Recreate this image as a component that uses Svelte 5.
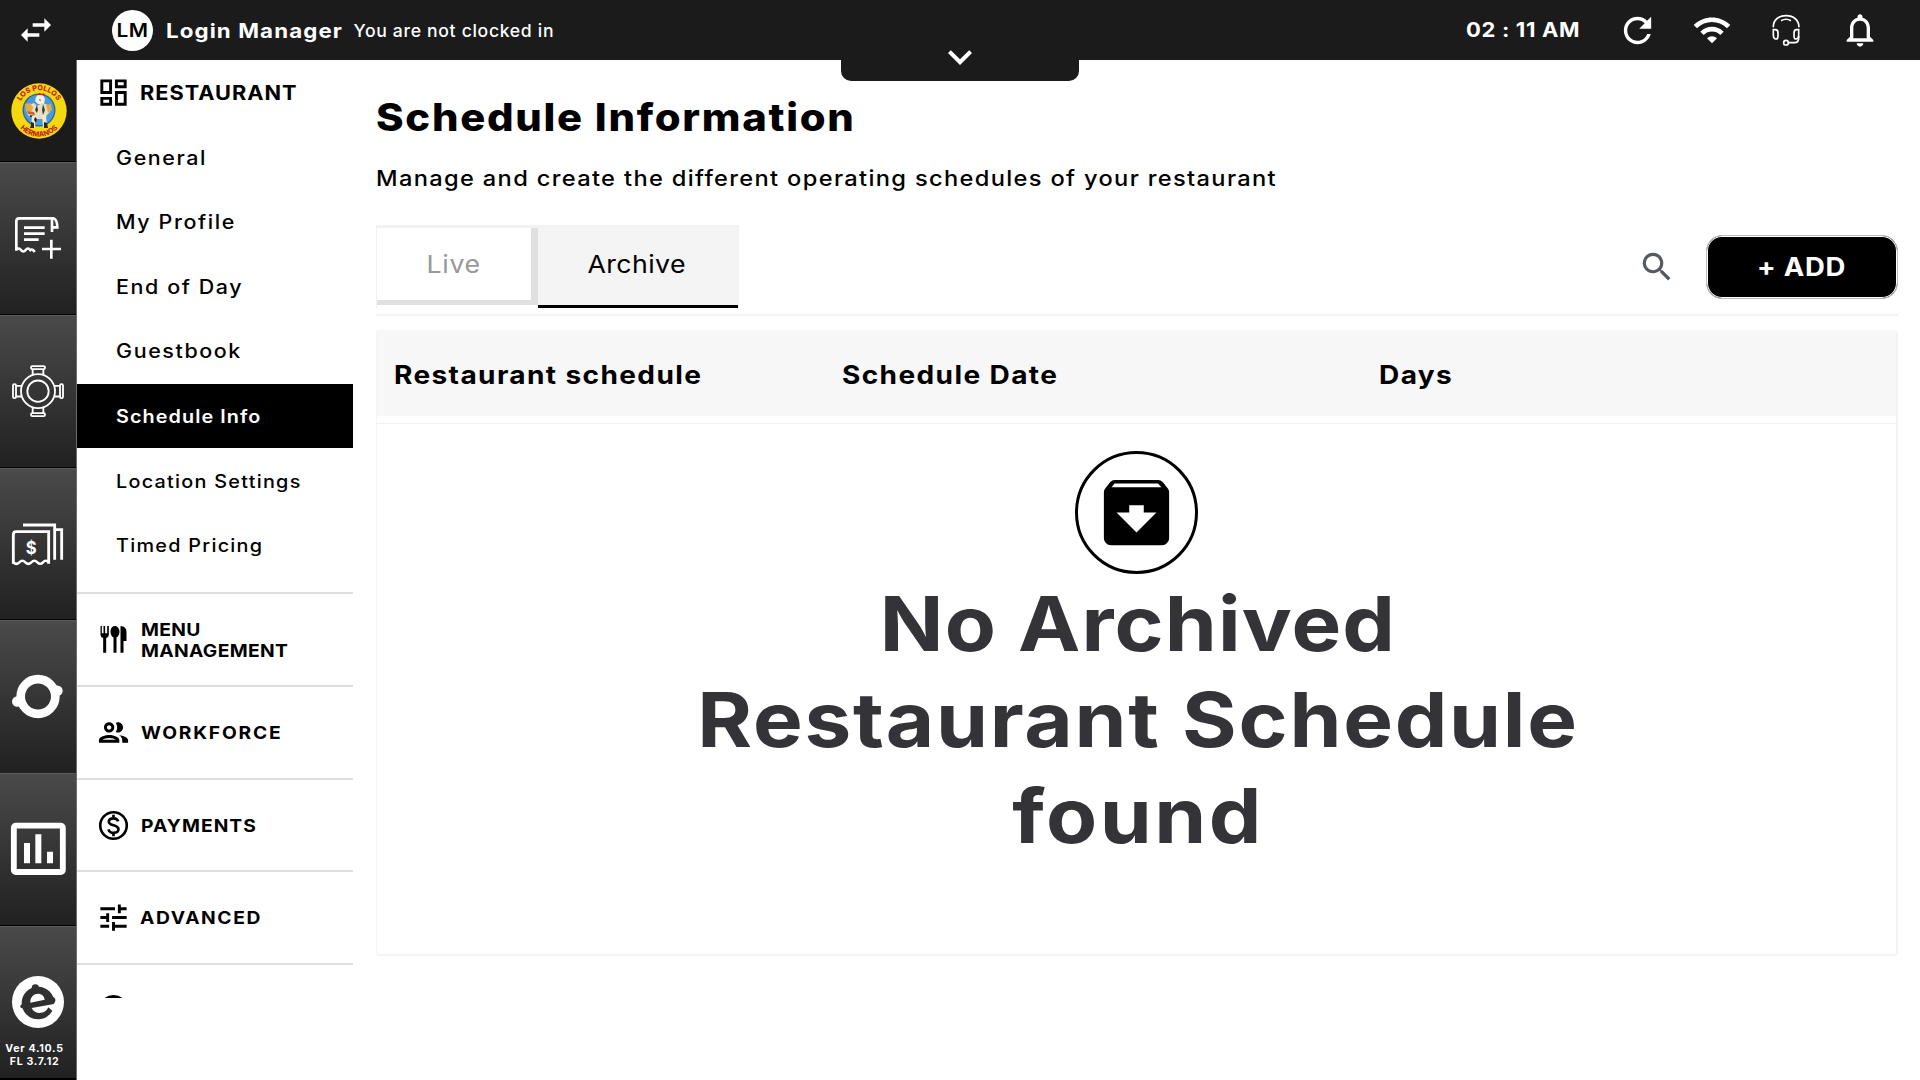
<script>
  const items = [
    { label: 'General' },
    { label: 'My Profile' },
    { label: 'End of Day' },
    { label: 'Guestbook' },
    { label: 'Schedule Info', cls: 'small active' },
    { label: 'Location Settings', cls: 'small' },
    { label: 'Timed Pricing', cls: 'small' }
  ];
</script>

<div class="app">
  <header>
    <div class="swap">
      <svg width="40" height="40" viewBox="0 0 24 24" fill="#fff"><path d="M6.99 11L3 15l3.99 4v-3H14v-2H6.99v-3zM21 9l-3.99-4v3H10v2h7.01v3L21 9z"/></svg>
    </div>
    <div class="avatar"><span class="wide mid">LM</span></div>
    <div class="name"><span class="wide">Login Manager</span></div>
    <div class="clock">You are not clocked in</div>
    <div class="time"><span class="wide">02 : 11 AM</span></div>
    <div class="tools">
      <svg width="41" height="41" viewBox="0 0 24 24" fill="#fff"><path d="M17.65 6.35C16.2 4.9 14.21 4 12 4c-4.42 0-7.99 3.58-7.99 8s3.57 8 7.99 8c3.73 0 6.84-2.55 7.73-6h-2.08c-.82 2.33-3.04 4-5.65 4-3.31 0-6-2.69-6-6s2.69-6 6-6c1.66 0 3.14.69 4.22 1.78L13 11h7V4l-2.35 2.35z"/></svg>
      <svg width="40" height="40" viewBox="0 0 24 24" fill="#fff"><path d="M1 9l2 2c4.97-4.97 13.03-4.97 18 0l2-2C16.93 2.93 7.08 2.93 1 9zm8 8l3 3 3-3c-1.65-1.66-4.34-1.66-6 0zm-4-4l2 2c2.76-2.76 7.24-2.76 10 0l2-2C15.14 9.14 8.87 9.14 5 13z"/></svg>
      <svg width="40" height="40" viewBox="1096 30 120 120" fill="none" stroke="#fff" stroke-width="5">
        <path d="M1118 82C1117 60 1134 47 1156 47S1195 60 1195 82"/>
        <path d="M1141 62C1150 57 1162 57 1171 62"/>
        <path d="M1118 89h6q8 0 8 10v8q0 10-6 10q-8 0-8-12zM1194 89h-6q-8 0-8 10v8q0 10 6 10q8 0 8-12z"/>
        <path d="M1194 108v6q0 14-12 14h-18"/>
        <circle cx="1156" cy="128" r="7"/>
      </svg>
      <svg width="40" height="40" viewBox="0 0 24 24" fill="#fff"><path d="M12 22c1.1 0 2-.9 2-2h-4c0 1.1.9 2 2 2zm6-6v-5c0-3.07-1.63-5.64-4.5-6.32V4c0-.83-.67-1.5-1.5-1.5s-1.5.67-1.5 1.5v.68C7.64 5.36 6 7.92 6 11v5l-2 2v1h16v-1l-2-2zm-2 1H8v-6c0-2.48 1.51-4.5 4-4.5s4 2.02 4 4.5v6z"/></svg>
    </div>
    <div class="drawer">
      <svg width="48" height="48" viewBox="0 0 24 24" fill="#fff"><path d="M16.59 8.59L12 13.17 7.41 8.59 6 10l6 6 6-6z"/></svg>
    </div>
  </header>

  <div class="body">
    <aside class="rail">
      <div class="logo">
        <svg width="56" height="56" viewBox="0 0 56 56">
          <defs>
            <path id="arc-top" d="M7.2 28A20.8 20.8 0 0 1 48.8 28"/>
            <path id="arc-bottom" d="M2.4 28A25.6 25.6 0 0 0 53.6 28"/>
          </defs>
          <circle cx="28" cy="28" r="27.7" fill="#f5d90f"/>
          <circle cx="28" cy="27" r="16.5" fill="#2c5f9e"/>
          <circle cx="28" cy="27" r="15.2" fill="#4a9bdc"/>
          <path d="M25 14l3-3 4 1 2 4-1 5h-6l-3-3z" fill="#f4f1e6"/>
          <path d="M26 12l2-2 3 1 2-1 1 3-4-1z" fill="#c5281c"/>
          <path d="M18 22l5-2 3 3 5-3 6 2 2 7-4 4-3 3H22l-5-4-2-5z" fill="#e8dfc0"/>
          <path d="M14 21l5-1 3 4-1 4-6 1zM35 22l5-1 1 6-4 3z" fill="#e0a94c"/>
          <path d="M16 28l7 1 1 3-7-1z" fill="#cf5f28"/>
          <path d="M26 22l1 5-1 3-2-3zM32 21l2 6-2 5-1-5zM19 32l5 1-1 2-4-1zM28 16l2 1-1 1z" fill="#3b3a33"/>
          <path d="M21 33h4l-1 11h-4zM31 32h4l1 12h-4z" fill="#efe8d2"/>
          <path d="M20 39l3 1v5h-4l1-3zM33 39l3 1 1 5h-4zM24 34l2 2-1 4-2-3z" fill="#2b2721"/>
          <text class="logo-text"><textPath href="#arc-top" startOffset="50%" text-anchor="middle">LOS POLLOS</textPath></text>
          <text class="logo-text"><textPath href="#arc-bottom" startOffset="50%" text-anchor="middle">HERMANOS</textPath></text>
        </svg>
      </div>
      <div class="tiles">
        <div class="tile">
          <svg viewBox="0 33 231 458.5" fill="none" stroke="#fff" stroke-width="8">
            <path d="M49 302V214q0-9 9-9H160q12 4 12 27H156M156 206V246M49 300q7-9 14 0t14 0t14 0q6-5 13 6"/>
            <path d="M72 233h62M72 251h62M72 269h44M126 297h57M154 269v57"/>
          </svg>
        </div>
        <div class="tile">
          <svg viewBox="0 491.5 231 458.5" fill="none" stroke="#fff" stroke-width="5.5">
            <circle cx="114" cy="723" r="51"/><circle cx="114" cy="723" r="32"/>
            <rect x="93" y="648" width="42" height="9" rx="4"/><path d="M98 657v16M130 657v16"/>
            <rect x="93" y="789" width="42" height="9" rx="4"/><path d="M98 789v-16M130 789v-16"/>
            <rect x="39" y="702" width="9" height="42" rx="4"/><path d="M48 707h16M48 739h16"/>
            <rect x="180" y="702" width="9" height="42" rx="4"/><path d="M180 707h-16M180 739h-16"/>
          </svg>
        </div>
        <div class="tile">
          <svg viewBox="0 949 231 458.5" fill="none" stroke="#fff" stroke-width="8.500">
            <path d="M40 1239v-87q0-9 9-9h97v96"/>
            <path d="M40 1235q9 9 18 0t18 0t18 0t18 0t17 0t17 0" stroke-width="7.500"/>
            <path d="M69 1123h95v104M168 1137h17v90"/>
            <text class="dollar" x="94" y="1209" text-anchor="middle">$</text>
          </svg>
        </div>
        <div class="tile">
          <svg viewBox="0 27.500 231 458.5">
            <circle cx="114" cy="260" r="52" fill="none" stroke="#fff" stroke-width="26"/>
            <circle cx="52" cy="275" r="16" fill="#fff"/><circle cx="172" cy="243" r="16" fill="#fff"/>
          </svg>
        </div>
        <div class="tile flush">
          <svg viewBox="0 486 231 458.5">
            <rect x="41.500" y="647" width="147" height="139" rx="6" fill="none" stroke="#fff" stroke-width="17.500"/>
            <path d="M72 699h18v61H72zM106 673h18v87h-18zM141 725h18v35h-18z" fill="#fff"/>
          </svg>
        </div>
        <div class="tile">
          <svg viewBox="0 944 231 458.5">
            <circle cx="114" cy="1175" r="78" fill="#fff"/>
            <g fill="#303030">
              <circle cx="114" cy="1178" r="49"/><circle cx="106" cy="1133" r="11"/><circle cx="67" cy="1188" r="6"/><circle cx="156" cy="1170" r="10"/>
            </g>
            <path d="M91 1177C90 1144 131 1142 134 1168zM95 1193L158 1182L172 1176L176 1212L160 1204L145 1191C136 1213 104 1214 95 1193z" fill="#fff"/>
          </svg>
          <p class="version">Ver 4.10.5<br>FL 3.7.12</p>
        </div>
      </div>
    </aside>

    <nav>
      <div class="group">
        <svg width="35" height="35" viewBox="0 0 24 24"><path d="M19 5v2h-4V5h4M9 5v6H5V5h4m10 8v6h-4v-6h4M9 17v2H5v-2h4M21 3h-8v6h8V3zM11 3H3v10h8V3zm10 8h-8v10h8V11zm-10 4H3v6h8v-6z"/></svg>
        <span class="wide">RESTAURANT</span>
      </div>
      {#each items as it}
        <div class="item {it.cls ?? ''}"><span class="wide">{it.label}</span></div>
      {/each}
      <div class="sections">
        <div class="section">
          <svg width="35" height="35" viewBox="64.500 126 105 105"><path d="M78 138h4v22h5v-22h5v22h6v-22h5v26q0 8-8 10v44h-9v-44q-8-2-8-10zM121 138c8 0 14 8 14 17 0 8-4 15-9 17v46h-9v-46c-5-2-9-9-9-17 0-9 5-17 13-17zM138 138q18 2 18 18v27h-9v35h-9z"/></svg>
          <span class="wide">MENU<br>MANAGEMENT</span>
        </div>
        <div class="section">
          <svg width="35" height="35" viewBox="0 0 24 24"><path d="M9 13.750c-2.340 0-7 1.170-7 3.500V19h14v-1.750c0-2.330-4.660-3.500-7-3.500zM4.340 17c.84-.58 2.870-1.250 4.660-1.250s3.820.67 4.660 1.250H4.340zM9 12c1.930 0 3.500-1.570 3.500-3.500S10.930 5 9 5 5.500 6.570 5.500 8.500 7.070 12 9 12zm0-5c.83 0 1.500.67 1.500 1.500S9.830 10 9 10s-1.500-.67-1.500-1.500S8.170 7 9 7zm7.040 6.810c1.160.84 1.960 1.960 1.960 3.440V19h4v-1.750c0-2.020-3.500-3.170-5.960-3.440zM15 12c1.930 0 3.500-1.570 3.500-3.500S16.930 5 15 5c-.54 0-1.040.13-1.500.35.63.89 1 1.980 1 3.150s-.37 2.260-1 3.150c.46.22.96.35 1.500.35z"/></svg>
          <span class="wide w">WORKFORCE</span>
        </div>
        <div class="section">
          <svg width="35" height="35" viewBox="0 0 24 24" fill="none" stroke="#000" stroke-width="1.800"><circle cx="12" cy="12" r="9.100"/><path d="M15.200 9.200C14.700 7.800 13.600 7.100 12 7.100c-1.900 0-3.200.9-3.200 2.300 0 3.200 6.600 1.800 6.600 5.200 0 1.500-1.400 2.400-3.300 2.400-1.800 0-3.100-.8-3.600-2.400M12 4.600v2.600M12 16.900v2.500"/></svg>
          <span class="wide p">PAYMENTS</span>
        </div>
        <div class="section">
          <svg width="35" height="35" viewBox="0 0 24 24"><path d="M3 17v2h6v-2H3zM3 5v2h10V5H3zm10 16v-2h8v-2h-8v-2h-2v6h2zM7 9v2H3v2h4v2h2V9H7zm14 4v-2H11v2h10zm-6-4h2V7h4V5h-4V3h-2v6z"/></svg>
          <span class="wide a">ADVANCED</span>
        </div>
        <div class="section">
          <svg width="35" height="35" viewBox="0 0 24 24"><path d="M12 2a10 10 0 1 0 0 20a10 10 0 1 0 0-20z"/></svg>
        </div>
      </div>
    </nav>

    <main>
      <h1><span class="wide">Schedule Information</span></h1>
      <p class="sub"><span class="wide">Manage and create the different operating schedules of your restaurant</span></p>
      <div class="toolbar">
        <div class="tabs">
          <div class="tab live"><span class="wide mid">Live</span></div>
          <div class="tab archive"><span class="wide mid">Archive</span></div>
        </div>
        <div class="actions">
          <svg width="38" height="38" viewBox="0 0 24 24" fill="#555960"><path d="M15.500 14h-.79l-.28-.27C15.410 12.590 16 11.110 16 9.500 16 5.910 13.090 3 9.500 3S3 5.910 3 9.500 5.910 16 9.500 16c1.610 0 3.090-.59 4.230-1.570l.27.28v.79l5 4.990L20.490 19l-4.990-5zm-6 0C7.010 14 5 11.990 5 9.500S7.010 5 9.500 5 14 7.010 14 9.500 11.990 14 9.500 14z"/></svg>
          <button><span class="wide mid">+ ADD</span></button>
        </div>
      </div>
      <section class="table">
        <div class="thead">
          <div><span class="wide">Restaurant schedule</span></div>
          <div><span class="wide">Schedule Date</span></div>
          <div><span class="wide">Days</span></div>
        </div>
        <div class="tbody">
          <div class="badge">
            <svg width="87" height="87" viewBox="0 0 24 24"><path d="M20.540 5.230l-1.390-1.680C18.880 3.210 18.470 3 18 3H6c-.47 0-.88.21-1.160.55L3.460 5.230C3.170 5.570 3 6.020 3 6.500V19c0 1.100.9 2 2 2h14c1.100 0 2-.9 2-2V6.500c0-.48-.17-.93-.46-1.270zM12 17.500L6.500 12H10v-2h4v2h3.500L12 17.500zM5.120 5l.81-1h12l.94 1H5.120z"/></svg>
          </div>
          <h2><span class="first">No Archived</span> Restaurant Schedule <span class="last">found</span></h2>
        </div>
      </section>
    </main>
  </div>
</div>

<style>
  :global(body) { margin: 0; background: #fff; }
  .app { width: 1920px; height: 1080px; overflow: hidden; display: flex; flex-direction: column; font-family: Inter, "Liberation Sans", sans-serif; color: #000; background: #fff; }
  .app :global(svg) { display: block; flex: none; }

  /* Slightly extended letterforms for headings and labels */
  .wide { display: inline-block; transform: scaleX(1.1); transform-origin: left center; white-space: nowrap; }
  .mid { transform-origin: center; }

  header { position: relative; flex: none; height: 60px; background: #1b1b1b; color: #fff; display: flex; align-items: center; white-space: nowrap; }
  .swap { width: 112px; padding-left: 16px; box-sizing: border-box; }
  .avatar { width: 41px; height: 41px; border-radius: 50%; background: #fff; color: #000; font-size: 19px; font-weight: 600; letter-spacing: .4px; display: flex; align-items: center; justify-content: center; }
  .name { width: 188px; margin-left: 12.500px; font-size: 20.300px; font-weight: 700; letter-spacing: 1px; }
  .clock { width: 1112.500px; font-size: 17.600px; font-weight: 500; letter-spacing: .68px; }
  .time { width: 151px; font-size: 20px; font-weight: 700; letter-spacing: .6px; }
  .tools { display: flex; gap: 34px; align-items: center; }
  .drawer { position: absolute; left: 841px; top: 30px; width: 238px; height: 51px; border-radius: 0 0 10px 10px; background: #1b1b1b; display: flex; justify-content: center; align-items: flex-start; }
  .drawer svg { margin-top: 3px; }

  .body { flex: 1; display: flex; min-height: 0; }
  .rail { width: 77px; box-sizing: border-box; border-right: 1px solid #6b6b6b; background: #1b1b1b; color: #fff; display: flex; flex-direction: column; }
  .logo { height: 101px; flex: none; display: flex; justify-content: center; align-items: center; padding: 1px 0 0 1px; box-sizing: border-box; }
  .logo-text { font: 800 7.200px Inter, sans-serif; fill: #c5261d; }
  .tiles { flex: none; height: 917px; display: grid; grid-template-rows: repeat(6, minmax(0, 1fr)); border-bottom: 2px solid #000; }
  .tile { display: grid; border-top: 1px solid #000; background: linear-gradient(#4a4a4a, #212121); box-shadow: inset 0 1px 0 #5c5c5c; }
  .tile.flush { border-top-color: #222; }
  .tile svg { grid-area: 1 / 1; width: 77px; height: 152.830px; margin: -1px -1px -1px 0; }
  .dollar { font: 700 50px Inter, sans-serif; fill: #fff; stroke: none; }
  .version { grid-area: 1 / 1; align-self: end; margin: 0 7px 10px 0; text-align: center; font-size: 10.600px; line-height: 13px; font-weight: 700; letter-spacing: .7px; white-space: nowrap; }

  nav { width: 276px; height: 938px; flex: none; overflow: hidden; }
  .group { height: 65.500px; display: flex; align-items: center; padding-left: 19px; }
  .group span { margin-left: 9px; font-size: 19.800px; font-weight: 700; letter-spacing: .9px; }
  .item { box-sizing: border-box; height: 64.600px; padding: 1.200px 0 0 39px; line-height: 63.400px; font-size: 19.500px; font-weight: 500; letter-spacing: 1.450px; }
  .item.small { font-size: 18px; letter-spacing: 1.150px; }
  .item.active { background: #000; color: #fff; font-weight: 600; letter-spacing: .98px; }
  .sections { margin-top: 14.500px; }
  .section { height: 92.750px; box-sizing: border-box; border-top: 2px solid #dedede; display: flex; align-items: center; padding-left: 19px; }
  .section span { margin-left: 9.600px; font-size: 17.500px; line-height: 21px; font-weight: 700; letter-spacing: .3px; }
  .section .w { letter-spacing: 1.600px; }
  .section .p { letter-spacing: .95px; }
  .section .a { letter-spacing: 1.450px; margin-left: 9px; }
  .section:last-child svg { margin-top: -3px; }

  main { flex: 1; padding: 32px 22px 0 23px; }
  h1 { margin: -.5px 0 0 -.5px; font-size: 38px; line-height: 50px; font-weight: 800; letter-spacing: 1.550px; }
  .sub { margin: 21.500px 0 0 -.5px; font-size: 21.500px; line-height: 31px; font-weight: 500; letter-spacing: 1.210px; }
  .toolbar { height: 91px; box-sizing: border-box; margin-top: 31px; border-bottom: 2px solid #f4f4f4; display: flex; justify-content: space-between; align-items: flex-start; }
  .tabs { display: flex; align-items: flex-start; border: 1px solid #f2f2f2; border-width: 3px 1px 0; background: #fff; }
  .tab { box-sizing: border-box; text-align: center; font-size: 24.300px; line-height: 72px; }
  .live { width: 161px; height: 76.500px; border-right: 7px solid #e0e0e0; border-bottom: 5.500px solid #e0e0e0; color: #999; letter-spacing: .6px; }
  .archive { width: 200px; height: 80px; padding-right: 2px; background: #f4f4f4; border-bottom: 3px solid #000; letter-spacing: .35px; }
  .actions { display: flex; align-items: center; margin-top: 9.500px; }
  .actions svg { margin-right: 30.500px; }
  button { width: 192px; height: 64px; padding: 0; border: 1px solid #bbb; border-radius: 16px; background: #000; box-shadow: inset 0 0 0 1px #fff; color: #fff; font: 700 25px/60px Inter, sans-serif; letter-spacing: .7px; }
  .table { height: 626px; box-sizing: border-box; margin-top: 14px; border: 2px solid #f4f4f4; border-width: 0 2px 2px 1px; border-radius: 4px; overflow: hidden; }
  .thead { box-sizing: border-box; height: 86px; padding: 3px 0 0 16.500px; display: grid; grid-template-columns: 448.500px 537px 1fr; align-items: center; background: #f7f7f7; font-size: 25.500px; font-weight: 700; letter-spacing: 1.250px; }
  .tbody { margin-top: 7px; padding-top: 27px; border-top: 1px solid #f2f2f2; display: flex; flex-direction: column; align-items: center; }
  .badge { width: 123px; height: 123px; box-sizing: border-box; border: 3px solid #000; border-radius: 50%; display: flex; align-items: center; justify-content: center; }
  h2 { width: 872px; margin: .5px 0 0 3px; text-align: center; font-size: 76px; line-height: 96.300px; font-weight: 700; letter-spacing: 1.550px; color: #333338; transform: scaleX(1.1); }
  .first { letter-spacing: 1px; }
  .last { letter-spacing: 2.200px; }
</style>
